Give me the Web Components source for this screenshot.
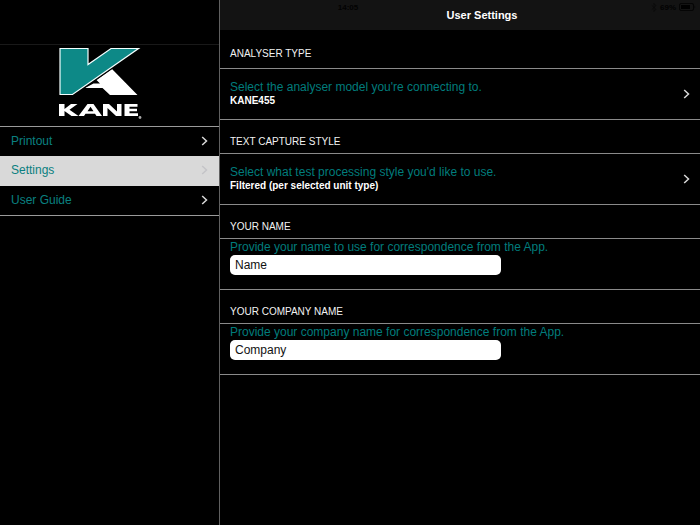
<!DOCTYPE html>
<html lang="en">
<head>
<meta charset="utf-8">
<meta name="viewport" content="width=device-width, initial-scale=1">
<title>User Settings</title>
<style>
html, body { height: 100%; }
body { margin: 0; background: #000; color: #fff; font-family: "Liberation Sans", Arial, sans-serif; }
</style>
</head>
<body>
<kane-app>
  <kane-sidebar slot="sidebar">
    <menu-item>Printout</menu-item>
    <menu-item selected>Settings</menu-item>
    <menu-item>User Guide</menu-item>
  </kane-sidebar>
  <nav-header slot="main">User Settings</nav-header>
  <settings-section slot="main" heading="ANALYSER TYPE" first>
    <choice-row label="Select the analyser model you're connecting to." value="KANE455"></choice-row>
  </settings-section>
  <settings-section slot="main" heading="TEXT CAPTURE STYLE">
    <choice-row label="Select what test processing style you'd like to use." value="Filtered (per selected unit type)"></choice-row>
  </settings-section>
  <settings-section slot="main" heading="YOUR NAME">
    <text-row label="Provide your name to use for correspondence from the App." value="Name"></text-row>
  </settings-section>
  <settings-section slot="main" heading="YOUR COMPANY NAME">
    <text-row label="Provide your company name for correspondence from the App." value="Company"></text-row>
  </settings-section>
</kane-app>
<script>
class BaseElement extends HTMLElement {
  connectedCallback() {
    if (this.shadowRoot) return;
    this.attachShadow({ mode: 'open' }).innerHTML = this.render();
  }
  attr(name) { return this.getAttribute(name) || ''; }
}

customElements.define('kane-app', class extends BaseElement {
  render() {
    return `<style>
      :host { display: grid; grid-template-columns: minmax(0, 11fr) minmax(0, 24fr); min-height: 100vh; position: relative; }
      aside { border-right: 1px solid #606060; }
      status-bar { position: absolute; top: 0; left: 0; right: 0; pointer-events: none; }
    </style>
    <aside><slot name="sidebar"></slot></aside>
    <main><slot name="main"></slot></main>
    <status-bar></status-bar>`;
  }
});

customElements.define('status-bar', class extends BaseElement {
  render() {
    return `<style>
      :host { display: grid; grid-template-columns: 1fr auto 1fr; align-items: center; height: 14px; padding-right: 4px; color: #020202; font-size: 8px; font-weight: 700; }
      .right { display: flex; justify-content: flex-end; align-items: center; gap: 3px; }
      svg { display: block; }
    </style>
    <span></span><span>14:05</span>
    <span class="right">
      <svg width="6" height="9" viewBox="0 0 6 9" fill="none" stroke="#0a0a0a" stroke-width="0.8"><path d="M.8 2.5 5 6.4 3 8.4V.6L5 2.6.8 6.5"/></svg>
      <span>69%</span>
      <svg width="17" height="8" viewBox="0 0 17 8"><rect x=".5" y=".5" width="14" height="7" rx="1.5" fill="none" stroke="#050505"/><rect x="2" y="2" width="9" height="4" fill="#000"/><path d="M15.5 2.5q1.5 1.5 0 3z" fill="#050505"/></svg>
    </span>`;
  }
});

customElements.define('kane-logo', class extends BaseElement {
  render() {
    return `<style>
      :host { display: block; }
      svg { display: block; }
    </style>
    <svg width="84" height="74" viewBox="0 0 84 74" role="img" aria-label="KANE">
      <path d="M54 24 79.500 50H52L44.500 43H27L35.500 38.500H42L38.500 35Z" fill="#fff"/>
      <path d="M2 3.500H30V19.500L53 3.500H80.500L14.500 49.500H2Z" fill="#0d8987" stroke="#000" stroke-width="3.500"/>
      <path d="M2 3.500H30V19.500L53 3.500H80.500L14.500 49.500H2Z" fill="#0d8987" stroke="#f4ffff" stroke-width="1.200"/>
      <g fill="#fff">
        <path d="M1 59H6.500V64L13 59H19.500L11.500 64.800 20.500 71H13.500L6.500 66V71H1Z"/>
        <path fill-rule="evenodd" d="M29.500 59H35.500L44 71H38.500L37 68.700H27.500L26 71H20.500ZM32.500 61.700 29.500 66.300H35.500Z"/>
        <path d="M45 59H51L59 66.500V59H63.500V71H58L49.500 63V71H45Z"/>
        <path d="M66.500 59H79.500V61.700H71.500V63.700H79V66.200H71.500V68.300H80V71H66.500Z"/>
      </g>
      <circle cx="82" cy="72.500" r="1.400" fill="#aaa"/>
    </svg>`;
  }
});

customElements.define('kane-sidebar', class extends BaseElement {
  render() {
    return `<style>
      :host { display: block; }
      .bar { height: 44px; border-bottom: 1px solid #191919; }
      .brand { display: flex; justify-content: center; padding: 0 19px 7px 0; }
      nav { border-top: 1px solid #9a9a9a; border-bottom: 1px solid #9a9a9a; }
    </style>
    <div class="bar"></div>
    <div class="brand"><kane-logo></kane-logo></div>
    <nav aria-label="Main"><slot></slot></nav>`;
  }
});

customElements.define('chevron-icon', class extends BaseElement {
  render() {
    return `<style>:host { display: block; flex: none; } svg { display: block; }</style>
    <svg width="7" height="10" viewBox="0 0 7 10" fill="none" stroke="currentColor" stroke-width="1.500" aria-hidden="true"><path d="M1.200 1 5.500 5 1.200 9"/></svg>`;
  }
});

customElements.define('menu-item', class extends BaseElement {
  render() {
    return `<style>
      :host { display: block; color: #d8d8d8; }
      a { display: flex; box-sizing: border-box; align-items: center; justify-content: space-between; height: 29px; padding: 0 11px 2px; color: inherit; text-decoration: none; font-size: 12px; }
      span { color: #0a8080; }
      :host([selected]) { background: #d9d9d9; color: #c4c4c8; }
      :host([selected]) a { height: 30px; }
    </style>
    <a href="#"${this.hasAttribute('selected') ? ' aria-current="page"' : ''}><span><slot></slot></span><chevron-icon></chevron-icon></a>`;
  }
});

customElements.define('nav-header', class extends BaseElement {
  render() {
    return `<style>
      :host { display: block; background: #131313; }
      h1 { margin: 0; padding-left: 44px; font-size: 11px; line-height: 30px; text-align: center; }
    </style>
    <h1><slot></slot></h1>`;
  }
});

customElements.define('settings-section', class extends BaseElement {
  render() {
    return `<style>
      :host { display: block; }
      h2 { margin: 0; padding: 14px 10px 3px; border-bottom: 1px solid #8a8a8a; font-size: 10px; line-height: 16px; font-weight: 400; color: #f2f2f2; }
      :host([first]) h2 { padding: 16px 10px 6px; }
      div { border-bottom: 1px solid #8a8a8a; }
    </style>
    <section><h2>${this.attr('heading')}</h2><div><slot></slot></div></section>`;
  }
});

customElements.define('choice-row', class extends BaseElement {
  render() {
    return `<style>
      :host { display: block; }
      button { display: flex; width: 100%; height: 50px; align-items: center; justify-content: space-between; border: 0; margin: 0; padding: 0 10px; background: none; color: #d8d8d8; font: inherit; text-align: left; }
      .label, .value { display: block; line-height: 13px; }
      .label { font-size: 12px; color: #007c7c; }
      .value { font-size: 10px; font-weight: 700; color: #fff; }
    </style>
    <button type="button"><span><span class="label">${this.attr('label')}</span><span class="value">${this.attr('value')}</span></span><chevron-icon></chevron-icon></button>`;
  }
});

customElements.define('text-row', class extends BaseElement {
  render() {
    return `<style>
      :host { display: block; padding: 0 10px 14px; }
      label { display: block; font-size: 12px; line-height: 16px; color: #007c7c; }
      input { display: block; box-sizing: border-box; width: 59%; height: 20px; margin: 0; padding: 0 5px; border: 0; border-radius: 5px; background: #fff; color: #111; font: 12px "Liberation Sans", Arial, sans-serif; }
    </style>
    <label for="field">${this.attr('label')}</label><input id="field" type="text" value="${this.attr('value')}">`;
  }
});
</script>
</body>
</html>
